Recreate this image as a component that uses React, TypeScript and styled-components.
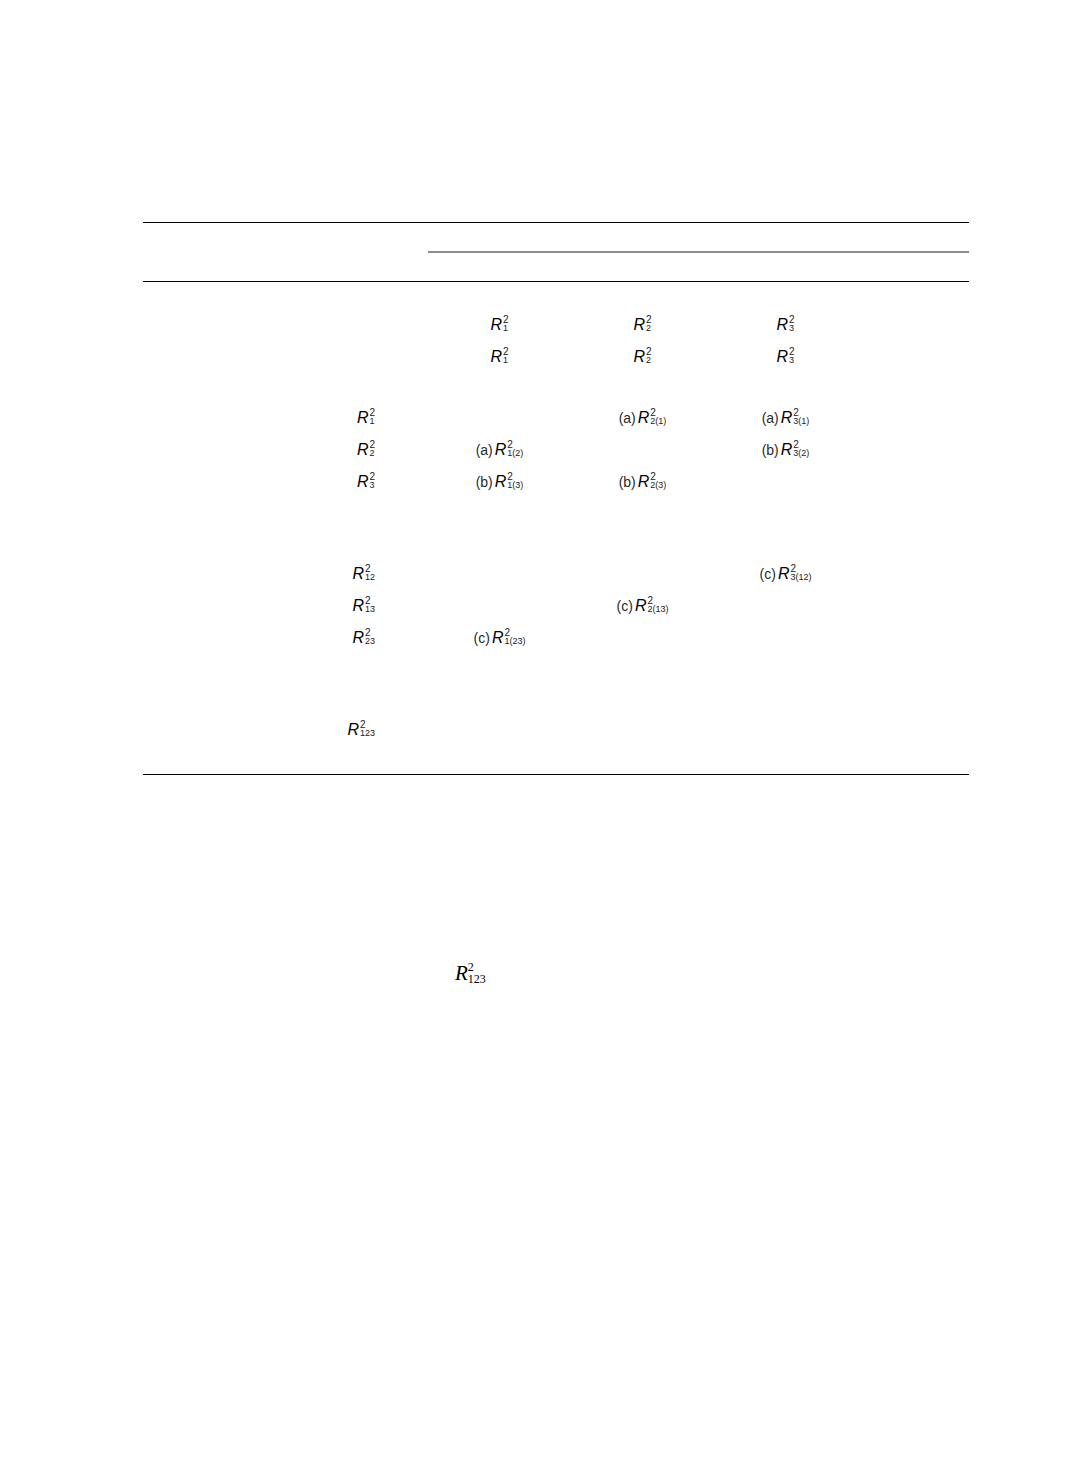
import React from "react";
import styled, { createGlobalStyle } from "styled-components";

const Global = createGlobalStyle`
  html, body { margin: 0; padding: 0; background: #fff; }
  body { font-family: "Liberation Sans", Arial, sans-serif; color: #000; }
`;

const Page = styled.div`
  width: 1082px;
  min-height: 1480px;
  padding: 222px 113px 0 143px;
  box-sizing: border-box;
`;

const Table = styled.div`
  width: 826px;
  border-top: 1px solid #000;
  border-bottom: 1px solid #000;
  display: flex;
  flex-direction: column;
`;

const Header = styled.div`
  display: grid;
  grid-template-columns: 285px 1fr;
  grid-template-rows: 30px 28px;
  border-bottom: 1px solid #000;
`;

const SpanRule = styled.div`
  grid-column: 2;
  grid-row: 1;
  align-self: end;
  border-bottom: 2px solid #8c8c8c;
`;

const Row = styled.div<{ $h?: number }>`
  display: grid;
  grid-template-columns: 285px 143px 143px 143px 1fr;
  height: ${(p) => p.$h ?? 32}px;
  align-items: center;
`;

const Label = styled.div`
  display: flex;
  justify-content: flex-end;
  padding-right: 53px;
`;

const Cell = styled.div`
  display: flex;
  justify-content: center;
`;

const F = styled.span`
  display: inline-flex;
  align-items: center;
  font-family: "Liberation Sans", Arial, sans-serif;
  font-size: 15px;
  color: #111;
  line-height: 1;
`;

const Prefix = styled.span`
  font-style: normal;
  font-size: 14px;
  margin-right: 2px;
  color: #2a2a2a;
`;

const Base = styled.span`
  font-style: italic;
  font-size: 16px;
  color: #000;
`;

const Scripts = styled.span`
  display: inline-flex;
  flex-direction: column;
  font-size: 10px;
  line-height: 9px;
  margin-left: 1px;
  margin-top: -3px;
  color: #222;
`;

const Sup = styled.span``;
const Sub = styled.span`
  font-size: 9px;
`;

const Trailing = styled.div`
  margin: 186px 0 0 312px;
  font-family: "Liberation Serif", "Times New Roman", serif;
  color: #000;
`;

const SerifR = styled.span`
  display: inline-flex;
  align-items: center;
`;

const SerifBase = styled.span`
  font-style: italic;
  font-size: 21px;
`;

const SerifScripts = styled.span`
  display: inline-flex;
  flex-direction: column;
  font-size: 12px;
  line-height: 12px;
  margin-left: 0;
  margin-top: -2px;
`;

type FProps = { sub: string; prefix?: string };

const R2 = ({ sub, prefix }: FProps) => (
  <F>
    {prefix && <Prefix>{prefix}</Prefix>}
    <Base>R</Base>
    <Scripts>
      <Sup>2</Sup>
      <Sub>{sub}</Sub>
    </Scripts>
  </F>
);

export default function App() {
  return (
    <>
      <Global />
      <Page>
        <Table>
          <Header>
            <SpanRule />
          </Header>
          <Row $h={27} />
          <Row>
            <Label />
            <Cell><R2 sub="1" /></Cell>
            <Cell><R2 sub="2" /></Cell>
            <Cell><R2 sub="3" /></Cell>
          </Row>
          <Row>
            <Label />
            <Cell><R2 sub="1" /></Cell>
            <Cell><R2 sub="2" /></Cell>
            <Cell><R2 sub="3" /></Cell>
          </Row>
          <Row $h={29} />
          <Row>
            <Label><R2 sub="1" /></Label>
            <Cell />
            <Cell><R2 prefix="(a)" sub="2(1)" /></Cell>
            <Cell><R2 prefix="(a)" sub="3(1)" /></Cell>
          </Row>
          <Row>
            <Label><R2 sub="2" /></Label>
            <Cell><R2 prefix="(a)" sub="1(2)" /></Cell>
            <Cell />
            <Cell><R2 prefix="(b)" sub="3(2)" /></Cell>
          </Row>
          <Row>
            <Label><R2 sub="3" /></Label>
            <Cell><R2 prefix="(b)" sub="1(3)" /></Cell>
            <Cell><R2 prefix="(b)" sub="2(3)" /></Cell>
            <Cell />
          </Row>
          <Row $h={60} />
          <Row>
            <Label><R2 sub="12" /></Label>
            <Cell />
            <Cell />
            <Cell><R2 prefix="(c)" sub="3(12)" /></Cell>
          </Row>
          <Row>
            <Label><R2 sub="13" /></Label>
            <Cell />
            <Cell><R2 prefix="(c)" sub="2(13)" /></Cell>
            <Cell />
          </Row>
          <Row>
            <Label><R2 sub="23" /></Label>
            <Cell><R2 prefix="(c)" sub="1(23)" /></Cell>
            <Cell />
            <Cell />
          </Row>
          <Row $h={60} />
          <Row>
            <Label><R2 sub="123" /></Label>
            <Cell />
            <Cell />
            <Cell />
          </Row>
          <Row $h={28} />
        </Table>
        <Trailing>
          <SerifR>
            <SerifBase>R</SerifBase>
            <SerifScripts>
              <span>2</span>
              <span>123</span>
            </SerifScripts>
          </SerifR>
        </Trailing>
      </Page>
    </>
  );
}
